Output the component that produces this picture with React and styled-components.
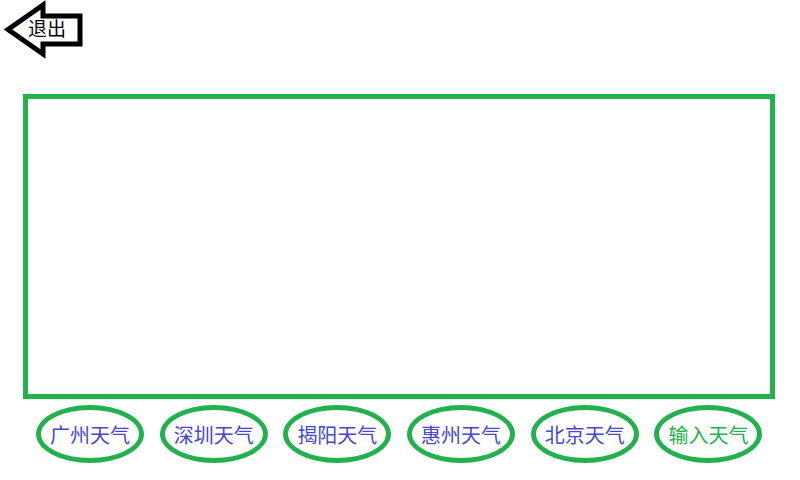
import styled, { createGlobalStyle } from 'styled-components'

const GlobalStyle = createGlobalStyle`
  body {
    margin: 0;
    background: #fff;
    font-family: "Noto Sans CJK SC", "Noto Sans", sans-serif;
  }
`

const Page = styled.div`
  width: 800px;
  height: 480px;
  display: flex;
  flex-direction: column;
`

const BackButton = styled.div`
  position: relative;
  width: 86px;
  height: 60px;
  cursor: pointer;
  svg {
    display: block;
  }
`

const BackLabel = styled.span`
  position: absolute;
  left: 28px;
  top: 16px;
  font-size: 19px;
  line-height: 24px;
  color: #000;
`

const Screen = styled.div`
  box-sizing: border-box;
  width: 752px;
  height: 305px;
  margin: 34px 0 0 23px;
  border: 5px solid #22b14c;
`

const CityRow = styled.div`
  display: flex;
  gap: 15.7px;
  margin: 6px 0 0 36px;
`

const CityButton = styled.div`
  box-sizing: border-box;
  width: 108px;
  height: 58px;
  border: 5px solid #22b14c;
  border-radius: 50%;
  display: flex;
  align-items: center;
  justify-content: center;
  font-size: 20px;
  color: ${p => (p.$input ? '#22b14c' : '#4646d6')};
  cursor: pointer;
`

const cities = ['广州天气', '深圳天气', '揭阳天气', '惠州天气', '北京天气']

const App = () => {
  return (
    <Page>
      <GlobalStyle />
      <BackButton>
        <svg width="86" height="60" viewBox="0 0 86 60">
          <polygon
            points="8,29.5 43,5 43,16 80,16 80,44 43,44 43,54"
            fill="#fff"
            stroke="#000"
            strokeWidth="5"
            strokeLinejoin="miter"
          />
        </svg>
        <BackLabel>退出</BackLabel>
      </BackButton>
      <Screen />
      <CityRow>
        {cities.map(c => (
          <CityButton key={c}>{c}</CityButton>
        ))}
        <CityButton $input>输入天气</CityButton>
      </CityRow>
    </Page>
  )
}

export default App
